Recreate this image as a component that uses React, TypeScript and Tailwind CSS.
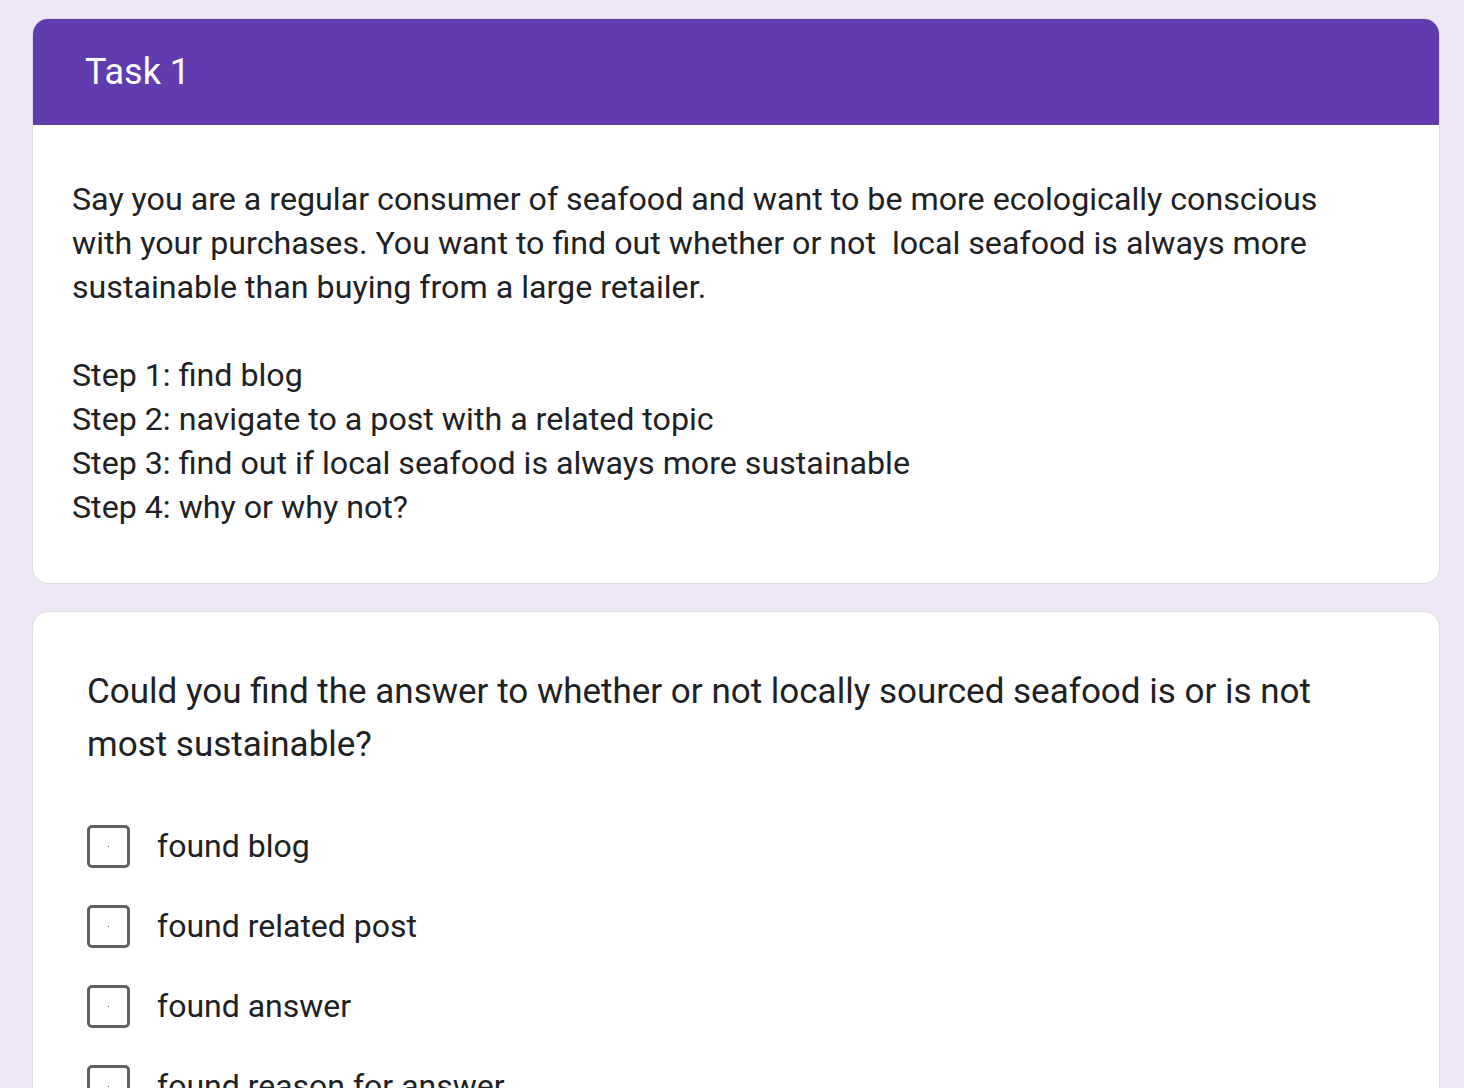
const steps = [
  "Step 1: find blog",
  "Step 2: navigate to a post with a related topic",
  "Step 3: find out if local seafood is always more sustainable",
  "Step 4: why or why not?",
];

const options = ["found blog", "found related post", "found answer", "found reason for answer"];

export default function App() {
  return (
    <div className="h-[1088px] overflow-hidden bg-[#ede7f6] pl-8 pr-6 pt-[18px] font-['Roboto',sans-serif] text-[#202124]">
      <section className="overflow-hidden rounded-[16px] border border-[#dadce0] bg-white">
        <div className="-mx-px -mt-px flex h-[107px] items-center bg-[#603cae] px-[53px]">
          <h1 className="text-[36px] text-white">Task 1</h1>
        </div>
        <div className="px-[39px] pb-[54px] pt-[52px] text-[32.2px] leading-[44px]">
          <p>
            Say you are a regular consumer of seafood and want to be more ecologically conscious
            <br />
            with your purchases. You want to find out whether or not&nbsp; local seafood is always more
            <br />
            sustainable than buying from a large retailer.
          </p>
          <p className="mt-[44px]">
            {steps.map((s) => (
              <span key={s} className="block">
                {s}
              </span>
            ))}
          </p>
        </div>
      </section>

      <section className="mt-[27px] rounded-[16px] border border-[#dadce0] bg-white px-[54px] pt-[53px]">
        <h2 className="text-[35px] leading-[53px]">
          Could you find the answer to whether or not locally sourced seafood is or is not
          <br />
          most sustainable?
        </h2>
        <ul className="mt-[54px] flex flex-col gap-[37px]">
          {options.map((o) => (
            <li key={o} className="flex items-center gap-[27px]">
              <span className="flex h-[43px] w-[43px] items-center justify-center rounded-[5px] border-[3px] border-[#5f6368]">
                <span className="h-px w-px bg-[#5f6368]" />
              </span>
              <span className="text-[32px] leading-[43px]">{o}</span>
            </li>
          ))}
        </ul>
      </section>
    </div>
  );
}
